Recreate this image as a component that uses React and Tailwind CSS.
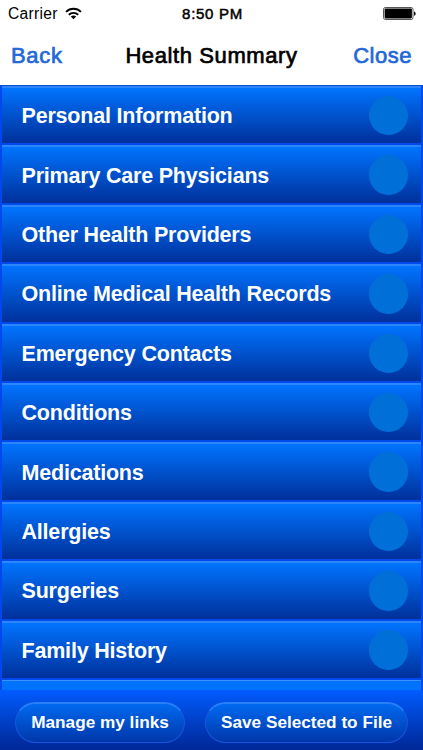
const sections = [
  'Personal Information',
  'Primary Care Physicians',
  'Other Health Providers',
  'Online Medical Health Records',
  'Emergency Contacts',
  'Conditions',
  'Medications',
  'Allergies',
  'Surgeries',
  'Family History',
];

function WifiIcon() {
  return (
    <svg className="ml-[7px] h-[13px] w-[17px]" viewBox="0 0 17 13" fill="none" stroke="#000" strokeWidth="1.9">
      <path d="M1 4.9C5.2 0.7 11.8 0.7 16 4.9" />
      <path d="M3.8 7.7C6.4 5.2 10.6 5.2 13.2 7.7" />
      <path d="M8.5 12.2L5.8 9.5C7.3 8.1 9.7 8.1 11.2 9.5Z" fill="#000" stroke="none" />
    </svg>
  );
}

function BatteryIcon() {
  return (
    <svg className="h-[14px] w-[34px]" viewBox="0 0 34 14">
      <rect x="0.5" y="0.5" width="29.5" height="12" rx="1.8" fill="#fff" stroke="#555" />
      <rect x="1.6" y="1.6" width="27.3" height="9.8" rx="0.8" fill="#000" />
      <path d="M31 4.4C33.2 4.8 33.2 8.4 31 8.8Z" fill="#111" />
    </svg>
  );
}

function Row({ label }) {
  return (
    <div className="flex h-[59.4px] shrink-0 flex-col">
      <div className="flex min-h-0 flex-1 items-center justify-between border-t-2 border-[#2b86fb] bg-linear-to-b from-[#0074ff] to-[#00309b] pr-[13px] pl-[19.5px]">
        <span className="pt-px text-[21.5px] leading-6 font-bold tracking-[-0.2px] whitespace-nowrap text-white">{label}</span>
        <span className="size-[39.5px] rounded-full bg-[#0070d8]" />
      </div>
      <div className="h-[2px] shrink-0 bg-[#0049ec]" />
    </div>
  );
}

function PillButton({ children, className }) {
  return (
    <button
      className={
        'flex h-[41px] items-center justify-center rounded-full border-[1.5px] border-t-2 border-[#1757dc] border-t-[#2580fa] bg-linear-to-b from-[#006cf4] to-[#0036a8] bg-origin-border text-[17.2px] font-bold whitespace-nowrap text-white ' +
        className
      }
    >
      {children}
    </button>
  );
}

export default function App() {
  return (
    <div className="flex h-[750px] w-[423px] flex-col overflow-hidden bg-white font-['Liberation_Sans',Arial,sans-serif]">
      <div className="grid h-7 shrink-0 grid-cols-3 items-center pr-[6px] pl-2 text-black">
        <div className="flex items-center">
          <span className="text-[15.6px] tracking-[0.3px]">Carrier</span>
          <WifiIcon />
        </div>
        <span className="text-center text-[15px] tracking-[0.7px] [-webkit-text-stroke:0.5px_#000]">8:50 PM</span>
        <div className="flex justify-end">
          <BatteryIcon />
        </div>
      </div>
      <div className="flex h-[57px] shrink-0 items-center justify-between px-[11px] pb-[2px] text-[22px] [-webkit-text-stroke:0.7px]">
        <span className="w-[60px] tracking-[0.7px] text-[#2468d8]">Back</span>
        <span className="tracking-[0.6px] text-black">Health Summary</span>
        <span className="w-[60px] text-right tracking-[0.5px] text-[#2468d8]">Close</span>
      </div>
      <div className="flex h-[605px] flex-col overflow-hidden border-x-2 border-t border-[#0047ee] border-t-[#0050d0]">
        {sections.map((label) => (
          <Row key={label} label={label} />
        ))}
        <div className="h-[11px] shrink-0 border-t border-[#3c91fb] bg-[#0073fc]" />
      </div>
      <div className="flex flex-1 items-start bg-linear-to-b from-[#005cff] to-[#002796] pt-[12px] pl-[15px]">
        <PillButton className="w-[170px]">Manage my links</PillButton>
        <PillButton className="ml-5 w-[203px]">Save Selected to File</PillButton>
      </div>
    </div>
  );
}
